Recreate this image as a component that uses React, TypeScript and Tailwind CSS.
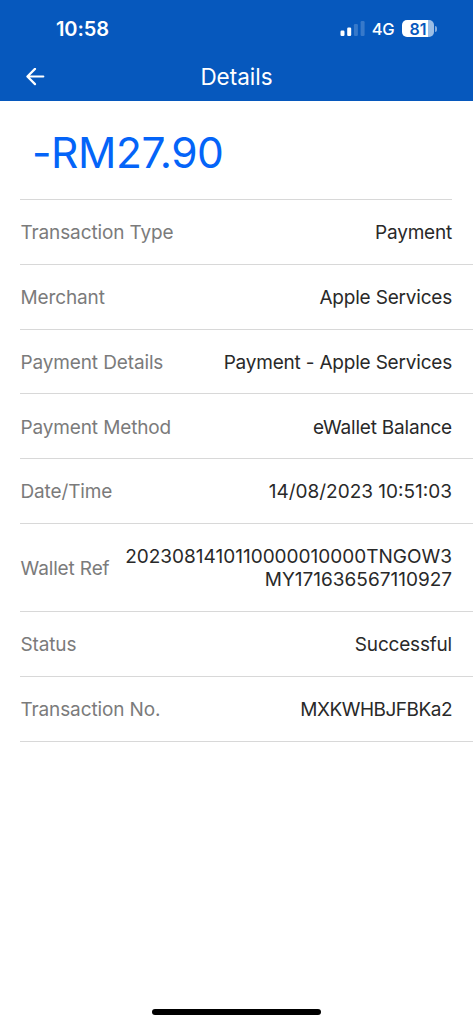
const details = [
  { label: "Transaction Type", value: "Payment" },
  { label: "Merchant", value: "Apple Services" },
  { label: "Payment Details", value: "Payment - Apple Services" },
  { label: "Payment Method", value: "eWallet Balance" },
  { label: "Date/Time", value: "14/08/2023 10:51:03", tracking: "tracking-normal" },
  {
    label: "Wallet Ref",
    value: "2023081410110000010000TNGOW3MY171636567110927",
    tracking: "tracking-normal",
    tall: true,
  },
  { label: "Status", value: "Successful" },
  { label: "Transaction No.", value: "MXKWHBJFBKa2", tracking: "tracking-[-0.5px]" },
];

function StatusBar() {
  return (
    <div className="flex h-[52px] items-center justify-between pt-[5px] pr-[36px] pl-[56px]">
      <span className="text-[20px] leading-6 font-semibold tracking-[-0.1px]">10:58</span>
      <div className="flex items-center">
        <svg className="h-[17px] w-[26px]" viewBox="0 0 26 17" fill="#fff">
          <rect x="0.5" y="10.5" width="4" height="5.5" rx="1.2" />
          <rect x="7.2" y="7.5" width="4" height="8.5" rx="1.2" />
          <rect x="13.9" y="4" width="4" height="12" rx="1.2" opacity="0.2" />
          <rect x="20.6" y="1" width="4" height="15" rx="1.2" opacity="0.2" />
        </svg>
        <span className="ml-[6px] pt-px text-[16.5px] leading-5 font-medium tracking-[-0.5px]">
          4G
        </span>
        <div className="ml-[8px] flex h-[17px] w-[32px] items-center justify-center rounded-[5px] bg-linear-to-r from-white from-81% to-[#9bbde5] to-81% text-[16px] leading-none font-semibold text-[#0658bd]">
          81
        </div>
        <div className="ml-[1px] h-[6px] w-[2px] rounded-r-full bg-[#83ace0]" />
      </div>
    </div>
  );
}

export default function App() {
  return (
    <div className="flex h-screen w-full flex-col overflow-hidden bg-white font-['Inter',sans-serif]">
      <header className="h-[101px] shrink-0 bg-[#0658bd] text-white">
        <StatusBar />
        <div className="grid h-[49px] grid-cols-[60px_1fr_60px] items-center">
          <button className="ml-[26px]" aria-label="Back">
            <svg
              className="h-[18px] w-[19px]"
              viewBox="0 0 19 18"
              fill="none"
              stroke="currentColor"
              strokeWidth="2.2"
              strokeLinecap="round"
              strokeLinejoin="round"
            >
              <path d="M17.3 8.5H1.5M9 0.9L1.4 8.5L9 16.1" />
            </svg>
          </button>
          <h1 className="pt-px text-center text-[22.5px]">Details</h1>
        </div>
      </header>

      <main className="pl-[20px]">
        <div className="mr-[21px] flex h-[99px] items-center border-b border-[#d8d8d8] pt-[7px] pl-[12px]">
          <p className="text-[42.5px] leading-none tracking-[-0.45px] text-[#0464f8]">-RM27.90</p>
        </div>
        <dl className="text-[19px] leading-[23.5px]">
          {details.map((item) => (
            <div
              key={item.label}
              className={`flex items-center justify-between border-b border-[#d8d8d8] pt-[2px] pr-[21px] ${
                item.tall ? "h-[88px]" : "h-[64.8px]"
              }`}
            >
              <dt className="shrink-0 pl-[0.5px] tracking-[-0.13px] text-[#7b7b7b]">
                {item.label}
              </dt>
              <dd
                className={`w-[328px] text-right break-all text-[#292929] ${
                  item.tracking ?? "tracking-[-0.2px]"
                }`}
              >
                {item.value}
              </dd>
            </div>
          ))}
        </dl>
      </main>

      <div className="mx-auto mt-auto mb-[9px] h-[6px] w-[169px] rounded-full bg-black" />
    </div>
  );
}
